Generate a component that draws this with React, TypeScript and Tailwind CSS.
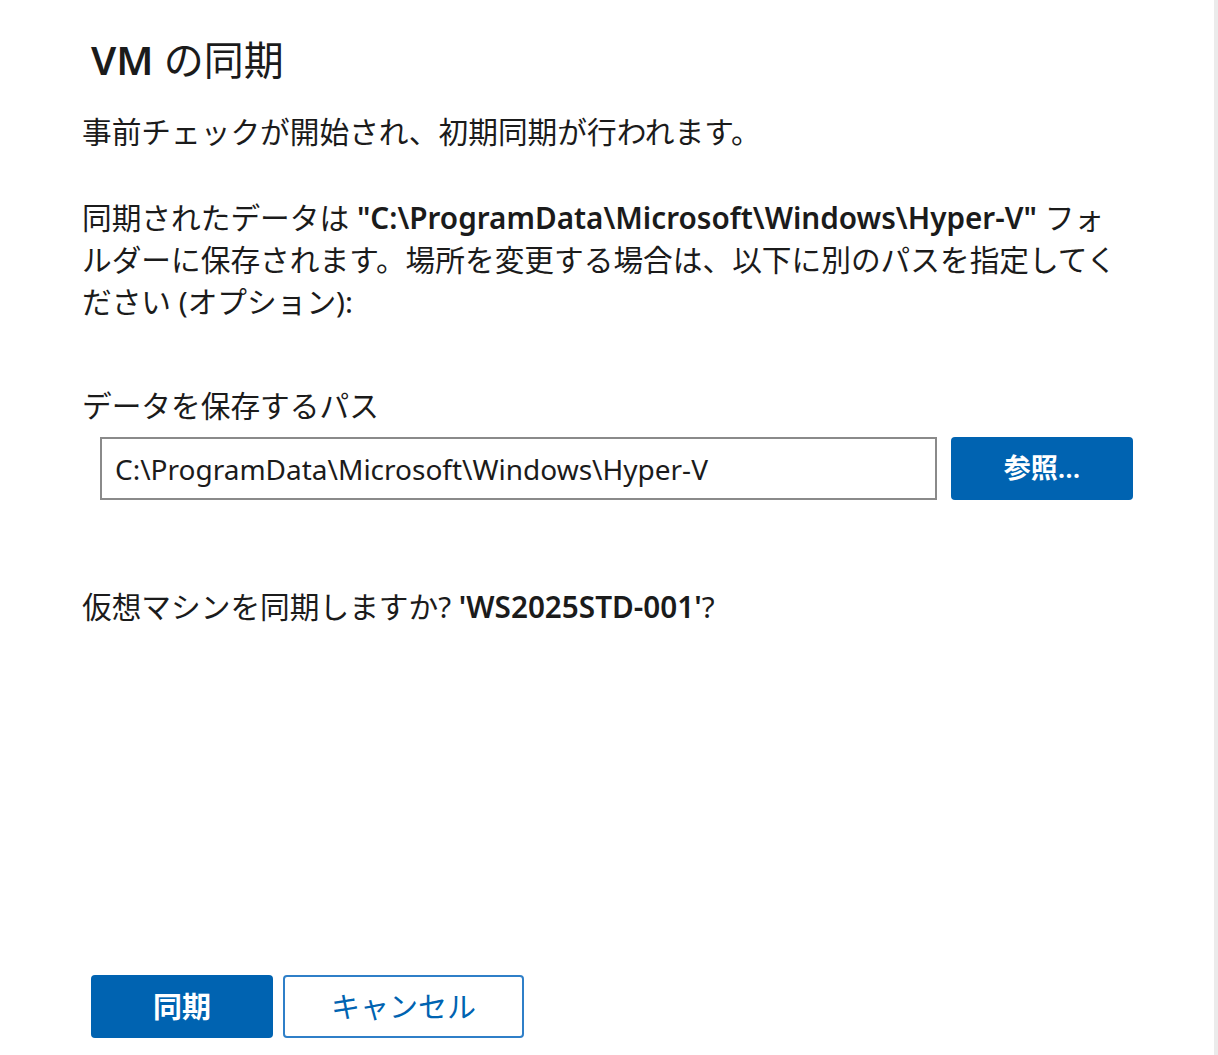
import React from "react";

const font = {
  fontFamily: '"Noto Sans", "Noto Sans CJK JP", sans-serif',
};

export default function App() {
  return (
    <div
      className="relative flex h-[1055px] w-[1218px] flex-col bg-white text-[#1b1b1b]"
      style={font}
    >
      {/* right edge strip */}
      <div className="absolute right-0 top-0 h-full w-[4px] bg-[#ebebeb]" />

      <div className="flex flex-1 flex-col pl-[82px] pr-[60px]">
        <h1 className="mt-[33px] pl-[9px] text-[40px] font-semibold leading-[54px]">
          VM <span className="font-normal">の同期</span>
        </h1>

        <p className="mt-[24px] whitespace-nowrap text-[29.7px] leading-[42px]">
          事前チェックが開始され、初期同期が行われます。
        </p>

        <p className="mt-[44px] whitespace-nowrap text-[29.7px] leading-[42px]">
          同期されたデータは{" "}
          <span className="font-semibold">
            "C:\ProgramData\Microsoft\Windows\Hyper-V"
          </span>{" "}
          フォ
          <br />
          ルダーに保存されます。場所を変更する場合は、以下に別のパスを指定してく
          <br />
          ださい (オプション):
        </p>

        <label className="mt-[62px] whitespace-nowrap text-[29.7px] leading-[42px]">
          データを保存するパス
        </label>

        <div className="mt-[10px] flex gap-[14px] pl-[18px]">
          <div className="flex h-[63px] w-[837px] shrink-0 items-center border-2 border-[#8a8a8a] px-[13px] text-[28px]">
            C:\ProgramData\Microsoft\Windows\Hyper-V
          </div>
          <button className="flex h-[63px] w-[182px] shrink-0 items-center justify-center rounded-[4px] bg-[#0063b1] text-[27px] font-semibold text-white">
            参照...
          </button>
        </div>

        <p className="mt-[86px] whitespace-nowrap text-[29.7px] leading-[42px]">
          仮想マシンを同期しますか?{" "}
          <span className="font-semibold">'WS2025STD-001'</span>?
        </p>

        <div className="mt-auto mb-[17px] flex gap-[10px] pl-[9px]">
          <button className="flex h-[63px] w-[182px] items-center justify-center rounded-[4px] bg-[#0063b1] text-[29px] font-semibold text-white">
            同期
          </button>
          <button className="flex h-[63px] w-[241px] items-center justify-center rounded-[4px] border-2 border-[#2f7fc8] bg-white text-[29px] text-[#0063b1]">
            キャンセル
          </button>
        </div>
      </div>
    </div>
  );
}
